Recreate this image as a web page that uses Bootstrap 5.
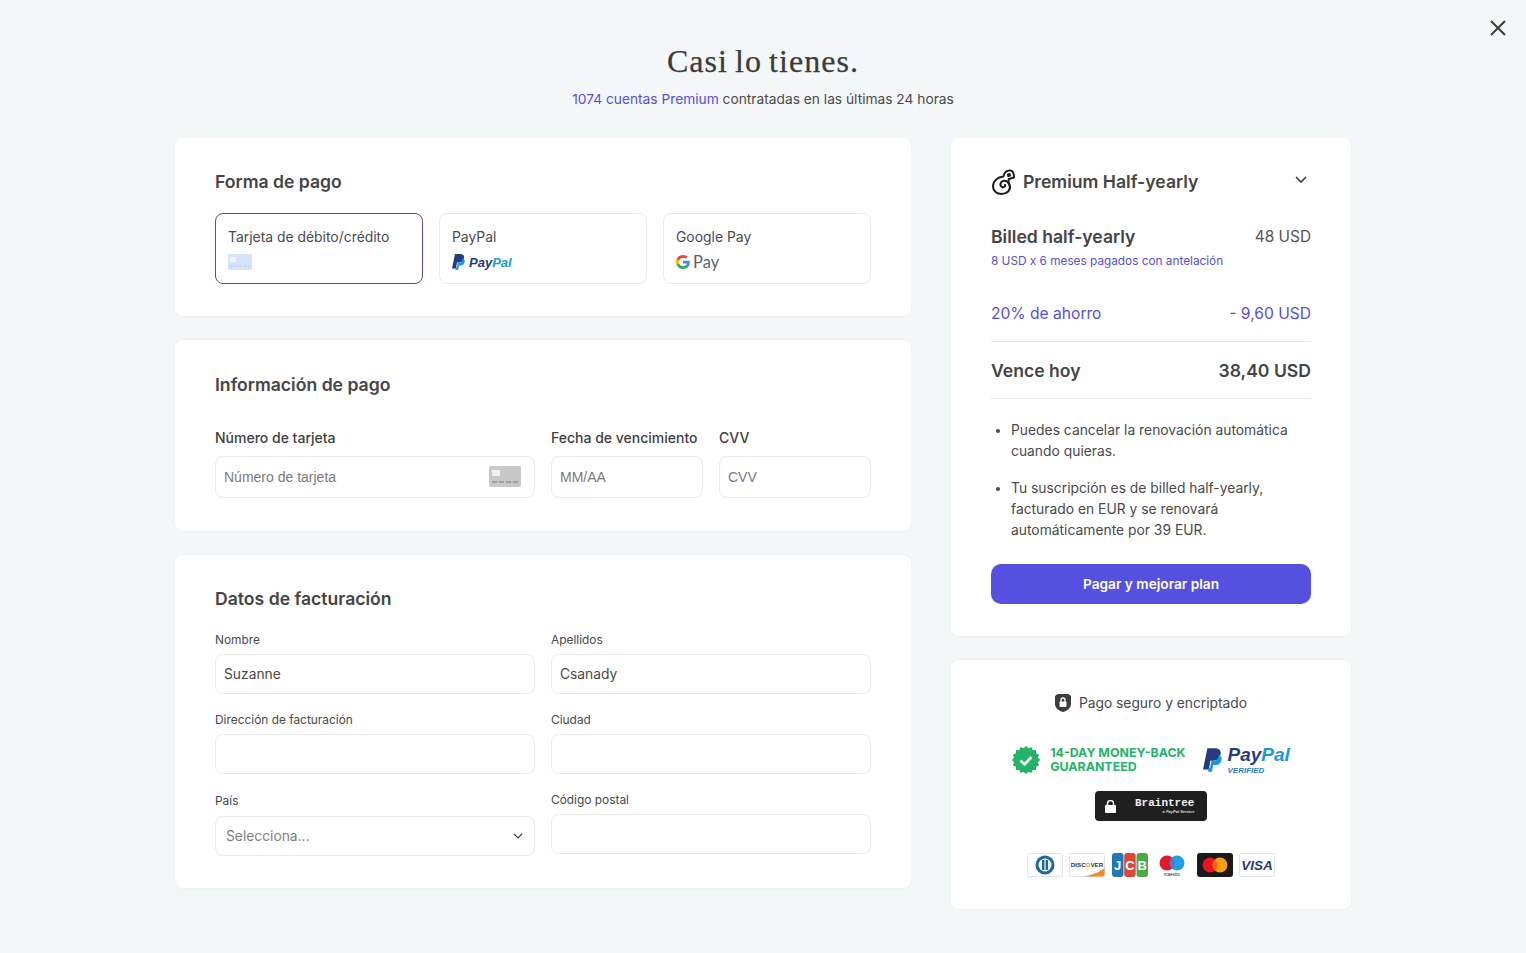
<!DOCTYPE html>
<html lang="es"><head><meta charset="utf-8">
<link href="https://cdn.jsdelivr.net/npm/bootstrap@5.3.0/dist/css/bootstrap.min.css" rel="stylesheet">
<style>
html,body{height:100%}
body{background:#f4f7f7;font-family:"Inter","Noto Sans",sans-serif;color:#3c3c3c;font-size:13.8px;overflow:hidden}
.shell{width:1176px;margin:0 auto;position:relative}
.close-x{position:absolute;top:20px;right:20px;background:none;border:0;padding:0;line-height:0}
.page-title{font-family:"Liberation Serif",serif;font-size:32px;letter-spacing:1.05px;word-spacing:-2px;color:#3b3a38;font-weight:400;-webkit-text-stroke:.25px #3b3a38;text-align:center;padding-top:43px;margin:0;line-height:36px}
.subline{text-align:center;margin:10px 0 20px;line-height:20px;height:29px;font-size:13.75px;color:#4a4a4a}
.violet{color:#5650d8}
.leftc{width:736px}.rightc{width:400px}
.panel{background:#fff;border:0;border-radius:8px;box-shadow:0 0 2px rgba(60,80,80,.08)}
.head{font-size:17.6px;font-weight:600;color:#454545;line-height:24px;margin:0}
.p1{height:178px;padding:32px 40px 0}
.p2{height:191px;padding:33px 40px 0}
.p3{height:333px;padding:32px 40px 0}
.opt{height:71px;border:1px solid #e8eaea;border-radius:8px;padding:13px 12px 0;font-size:13.9px;line-height:20px;color:#4b4b4b;background:#fff}
.opt.on{border-color:#5a4aa8}
.optlogo{height:22px;display:flex;align-items:center;margin-top:4px}
.pplogo{font:italic 700 13px "Liberation Sans",sans-serif;margin-left:4px}
.navy{color:#253b80}.sky{color:#179bd7}
.gp{font-family:"Lato",sans-serif;font-size:16.5px;color:#5f6368;margin:0 0 1px 3px;line-height:20px}
.blab{font-size:14px;font-weight:500;color:#404040;line-height:20px;margin:0 0 8px;display:block}
.slab{font-size:11.9px;color:#4a4a4a;line-height:16px;margin:0 0 6px;display:block}
.slab.pais{line-height:18px}
.fld{border:1px solid #e8eaea;border-radius:8px;box-shadow:none;padding:0 8px;font-size:13.8px;color:#4a4a4a;background-color:#fff}
.fld42{height:42px;font-family:"Liberation Sans",sans-serif;font-size:14px}
.fld42::placeholder{color:#7a7a7a}
.fld40{height:40px}
.sel{height:40px;border:1px solid #e8eaea;border-radius:8px;padding:0 36px 0 10px;color:#808080;font-size:13.8px;background-position:right 10px center;background-size:12px 10px}
.cardwrap{position:relative}
.cardgl{position:absolute;right:14px;top:10px;line-height:0}
.lab-b{font-size:17.6px;font-weight:600;color:#454545;line-height:24px}
.val{font-size:15.4px;color:#555;line-height:24px}
.sub{font-size:11.8px;color:#5650d8;line-height:16px;margin-top:4px}
.sv{font-size:15.6px;color:#5650d8;line-height:24px}
.rule{border-top:1px solid #e6e8e8;margin:0;opacity:1}
.bullets{margin:0;padding:0 0 0 20px;font-size:13.85px;line-height:21px;color:#4a4a4a;list-style:disc}
.bullets li+li{margin-top:16px}
.pay{height:40px;background:#5650e0;color:#fff;font-weight:600;font-size:13.7px;border:0;border-radius:10px;padding:1px 0 0}
.r1{height:498px;padding:32px 40px 0}
.r2{height:249px;padding:0 40px}
.secure{font-size:13.8px;color:#4a4a4a;line-height:20px;padding-top:33px}
.guar{font:700 12.4px/14px "Inter","Noto Sans",sans-serif;color:#25b36a;margin:0 0 0 10px}
.ppv{font:italic 700 19px/18px "Liberation Sans",sans-serif}
.ppvs{font:italic 700 8px/8px "Liberation Sans",sans-serif;color:#2a7cc0;margin-top:3px}
.btree{width:112px;height:30px;background:#1f1f1f;border-radius:4px;color:#fff}
.btn-name{font:700 11px/11px "Liberation Mono",monospace;color:#f1f1f1;display:block}
.btn-sub{font:italic 700 4px/5px "Liberation Sans",sans-serif;display:block;text-align:right;color:#ddd}
.paycard{height:24px;line-height:0;gap:6.4px}
</style></head>
<body>
<div class="shell">
<h1 class="page-title">Casi lo tienes.</h1>
<p class="subline"><span class="violet">1074 cuentas Premium</span> contratadas en las últimas 24 horas</p>
<div class="d-flex justify-content-between align-items-start">
 <div class="leftc d-flex flex-column gap-4">
  <section class="panel p1">
   <h2 class="head" style="margin-bottom:19px">Forma de pago</h2>
   <div class="row gx-3">
    <div class="col-4"><div class="opt on">Tarjeta de débito/crédito
      <div class="optlogo"><svg width="24" height="16" viewBox="0 0 24 16"><rect width="24" height="16" rx="1" fill="#d3e4fb"/><rect x="2" y="3" width="6" height="5" fill="#eef5ff"/><path d="M2 12h20" stroke="#b9cfee" stroke-dasharray="3 1.5"/></svg></div></div></div>
    <div class="col-4"><div class="opt">PayPal
      <div class="optlogo"><svg width="13" height="16" viewBox="0 0 13 16"><path d="M3 0h5c3 0 4.500 1.500 4 4-.6 3-2.800 4.500-5.500 4.500H5L4 14.500H0z" fill="#253b80"/><path d="M10.500 4.500c2 .6 2.500 2 2.200 3.500-.5 2.500-2.300 3.500-4.500 3.500H7L6.200 16H3.400l.5-2.500h.9l1-5h1.800c2.300 0 3-2 2.900-4z" fill="#179bd7"/></svg><span class="pplogo"><span class="navy">Pay</span><span class="sky">Pal</span></span></div></div></div>
    <div class="col-4"><div class="opt">Google Pay
      <div class="optlogo"><svg width="14" height="14" viewBox="0 0 24 24"><path d="M23.500 12.300c0-.9-.1-1.700-.2-2.500H12v4.700h6.500c-.3 1.500-1.100 2.800-2.400 3.600v3h3.900c2.300-2.100 3.500-5.200 3.500-8.800z" fill="#4285f4"/><path d="M12 24c3.200 0 6-1.100 8-2.900l-3.900-3c-1.100.7-2.500 1.200-4.100 1.200-3.100 0-5.800-2.100-6.700-5H1.300v3.100C3.300 21.300 7.300 24 12 24z" fill="#34a853"/><path d="M5.300 14.300c-.5-1.500-.5-3.100 0-4.600V6.600h-4a12 12 0 0 0 0 10.800z" fill="#fbbc05"/><path d="M12 4.800c1.800 0 3.300.6 4.600 1.800l3.400-3.400C18 1.200 15.200 0 12 0 7.300 0 3.300 2.700 1.300 6.600l4 3.100c.9-2.800 3.600-4.900 6.700-4.900z" fill="#ea4335"/></svg><span class="gp">Pay</span></div></div></div>
   </div>
  </section>
  <section class="panel p2">
   <h2 class="head" style="margin-bottom:31px">Información de pago</h2>
   <div class="row gx-3">
    <div class="col-6"><label class="blab" for="cn">Número de tarjeta</label><div class="cardwrap"><input id="cn" class="form-control fld fld42" placeholder="Número de tarjeta"><span class="cardgl"><svg width="32" height="21" viewBox="0 0 32 21"><rect width="32" height="21" rx="2" fill="#c8c8c8"/><rect x="3" y="4" width="8" height="6" fill="#f1f1f1"/><path d="M3 16h26" stroke="#8f8f8f" stroke-width="1.500" stroke-dasharray="5 2"/></svg></span></div></div>
    <div class="col-3"><label class="blab" for="mm">Fecha de vencimiento</label><input id="mm" class="form-control fld fld42" placeholder="MM/AA"></div>
    <div class="col-3"><label class="blab" for="cv">CVV</label><input id="cv" class="form-control fld fld42" placeholder="CVV"></div>
   </div>
  </section>
  <section class="panel p3">
   <h2 class="head" style="margin-bottom:21px">Datos de facturación</h2>
   <div class="row gx-3">
    <div class="col-6"><label class="slab" for="n1">Nombre</label><input id="n1" class="form-control fld fld40" value="Suzanne"></div>
    <div class="col-6"><label class="slab" for="n2">Apellidos</label><input id="n2" class="form-control fld fld40" value="Csanady"></div>
   </div>
   <div class="row gx-3" style="margin-top:18px">
    <div class="col-6"><label class="slab" for="n3">Dirección de facturación</label><input id="n3" class="form-control fld fld40"></div>
    <div class="col-6"><label class="slab" for="n4">Ciudad</label><input id="n4" class="form-control fld fld40"></div>
   </div>
   <div class="row gx-3" style="margin-top:18px">
    <div class="col-6"><label class="slab pais" for="n5">País</label><select id="n5" class="form-select sel"><option>Selecciona...</option></select></div>
    <div class="col-6"><label class="slab" for="n6">Código postal</label><input id="n6" class="form-control fld fld40"></div>
   </div>
  </section>
 </div>
 <div class="rightc d-flex flex-column gap-4">
  <section class="panel r1">
   <div class="d-flex align-items-center justify-content-between" style="height:24px;margin-bottom:31px">
    <div class="d-flex align-items-center"><svg width="24" height="26" viewBox="0 0 24 26" fill="none" stroke="#1d1d1d" stroke-width="2" stroke-linecap="round" stroke-linejoin="round"><path d="M12.500 7.500C13 3.500 16 1 19.500 1.500c2.500.4 3.500 3 3.500 7l-5 1.500c-1.500 1.800-.2 4 .8 6.500 1.200 4.500-3 8.500-8.300 8.500C6 25 2 22 2 17.500 2 12 6.500 8 12.500 7.500z"/><path d="M18.800 17.500c-.3-3.800-3.500-6.300-6.800-5.500-3 .9-3.500 5-.8 6 1.800.6 3.300-.8 2.800-2.300"/><circle cx="18" cy="6" r="1.100"/></svg><span class="head" style="margin-left:8px">Premium Half-yearly</span></div>
    <svg class="me-1 mb-1" width="12" height="8" viewBox="0 0 12 8" fill="none" stroke="#3a3a3a" stroke-width="1.600"><path d="M1 1l5 5 5-5"/></svg>
   </div>
   <div class="d-flex justify-content-between"><span class="lab-b">Billed half-yearly</span><span class="val">48 USD</span></div>
   <div class="sub" style="margin-bottom:33px">8 USD x 6 meses pagados con antelación</div>
   <div class="d-flex justify-content-between" style="margin-bottom:15px"><span class="sv">20% de ahorro</span><span class="sv">- 9,60 USD</span></div>
   <hr class="rule">
   <div class="d-flex justify-content-between align-items-center" style="height:56px;padding-top:1px"><span class="lab-b">Vence hoy</span><span class="lab-b">38,40 USD</span></div>
   <hr class="rule">
   <ul class="bullets" style="margin-top:21px">
    <li>Puedes cancelar la renovación automática cuando quieras.</li>
    <li>Tu suscripción es de billed half-yearly, facturado en EUR y se renovará automáticamente por 39 EUR.</li>
   </ul>
   <button class="btn pay w-100" style="margin-top:23px" type="button">Pagar y mejorar plan</button>
  </section>
  <section class="panel r2">
   <div class="secure d-flex align-items-center justify-content-center gap-2"><svg width="16" height="18" viewBox="0 0 16 18"><path d="M2.500 0h11L16 2v8c0 4-4 7-8 8-4-1-8-4-8-8V2z" fill="#3d3d3d"/><rect x="4.500" y="7.500" width="7" height="5.500" rx="1" fill="#fff"/><path d="M6 8V6a2 2 0 0 1 4 0v2" fill="none" stroke="#fff" stroke-width="1.300"/></svg><span>Pago seguro y encriptado</span></div>
   <div class="d-flex align-items-center justify-content-center" style="margin-top:29px;height:36px">
    <svg width="28" height="28" viewBox="0 0 28 28" fill="#25b36a"><rect x="4" y="4" width="20" height="20"/><rect x="4" y="4" width="20" height="20" transform="rotate(22.500 14 14)"/><rect x="4" y="4" width="20" height="20" transform="rotate(45 14 14)"/><rect x="4" y="4" width="20" height="20" transform="rotate(67.500 14 14)"/><path d="M8.500 14.500l4 4 7-7.500" fill="none" stroke="#fff" stroke-width="2.600"/></svg>
    <div class="guar">14-DAY MONEY-BACK<br>GUARANTEED</div>
    <svg width="19" height="24" viewBox="0 0 13 16" style="margin:0 6px 0 17px"><path d="M3 0h5c3 0 4.500 1.500 4 4-.6 3-2.800 4.500-5.500 4.500H5L4 14.500H0z" fill="#253b80"/><path d="M10.500 4.500c2 .6 2.500 2 2.200 3.500-.5 2.500-2.300 3.500-4.500 3.500H7L6.200 16H3.400l.5-2.500h.9l1-5h1.800c2.300 0 3-2 2.900-4z" fill="#179bd7"/></svg>
    <div><div class="ppv"><span class="navy">Pay</span><span class="sky">Pal</span></div><div class="ppvs">VERIFIED</div></div>
   </div>
   <div class="d-flex justify-content-center" style="margin-top:13px"><div class="btree d-flex align-items-center"><svg style="margin-left:10px" width="11" height="13" viewBox="0 0 11 13"><rect y="5" width="11" height="8" rx="1" fill="#fff"/><path d="M2.500 6V3.500a3 3 0 0 1 6 0V6" fill="none" stroke="#fff" stroke-width="1.500"/></svg><div style="margin-left:19px"><span class="btn-name">Braintree</span><span class="btn-sub">a PayPal Service</span></div></div></div>
   <div class="d-flex justify-content-center align-items-center paycard" style="margin-top:32px">
    <svg width="36" height="24" viewBox="0 0 36 24"><rect x=".5" y=".5" width="35" height="23" rx="2" fill="#fff" stroke="#dfe4e8"/><circle cx="18" cy="12" r="9.500" fill="#1a6a9e"/><circle cx="18" cy="12" r="6.500" fill="#fff"/><path d="M16.200 7v10M19.800 7v10" stroke="#1a6a9e" stroke-width="2.400"/></svg>
    <svg width="36" height="24" viewBox="0 0 36 24"><rect x=".5" y=".5" width="35" height="23" rx="2" fill="#fff" stroke="#dfe4e8"/><path d="M13 23.500c9-1 17-4 22.500-8.500v6.500a2 2 0 0 1-2 2z" fill="#f28a2e"/><text x="18" y="13.500" text-anchor="middle" font-family="Liberation Sans" font-weight="700" font-size="6.200" fill="#333">DISC<tspan fill="#f28a2e">O</tspan>VER</text></svg>
    <svg width="36" height="24" viewBox="0 0 36 24"><rect width="11.500" height="24" rx="3" fill="#1f77b4"/><rect x="12.200" width="11.500" height="24" rx="3" fill="#d9483b"/><rect x="24.500" width="11.500" height="24" rx="3" fill="#4aa846"/><text x="5.700" y="17" text-anchor="middle" font-family="Liberation Sans" font-weight="700" font-size="13" fill="#fff">J</text><text x="18" y="17" text-anchor="middle" font-family="Liberation Sans" font-weight="700" font-size="13" fill="#fff">C</text><text x="30.200" y="17" text-anchor="middle" font-family="Liberation Sans" font-weight="700" font-size="13" fill="#fff">B</text></svg>
    <svg width="36" height="24" viewBox="0 0 36 24"><circle cx="13" cy="10" r="7.500" fill="#e2182d"/><circle cx="23" cy="10" r="7.500" fill="#1fa0e3"/><path d="M18 4.400a7.500 7.500 0 0 1 0 11.200 7.500 7.500 0 0 1 0-11.200z" fill="#6c6bbd"/><text x="18" y="22.500" text-anchor="middle" font-family="Liberation Sans" font-size="4.500" fill="#222">maestro</text></svg>
    <svg width="36" height="24" viewBox="0 0 36 24"><rect width="36" height="24" rx="3" fill="#1a1a1a"/><circle cx="13" cy="12" r="7.500" fill="#e8141f"/><circle cx="23" cy="12" r="7.500" fill="#f79e1b"/><path d="M18 6.400a7.500 7.500 0 0 1 0 11.200 7.500 7.500 0 0 1 0-11.200z" fill="#ff5f00"/></svg>
    <svg width="36" height="24" viewBox="0 0 36 24"><rect x=".5" y=".5" width="35" height="23" rx="2" fill="#fff" stroke="#dfe4e8"/><text x="18" y="17" text-anchor="middle" font-family="Liberation Sans" font-style="italic" font-weight="700" font-size="13.500" fill="#253b80">VISA</text></svg>
   </div>
  </section>
 </div>
</div>
</div>
<button class="close-x" type="button" aria-label="Cerrar"><svg width="16" height="16" viewBox="0 0 16 16" stroke="#3d3d3d" stroke-width="2"><path d="M1 1l14 14M15 1L1 15"/></svg></button>
<script src="https://cdn.jsdelivr.net/npm/bootstrap@5.3.0/dist/js/bootstrap.bundle.min.js"></script>
</body></html>
